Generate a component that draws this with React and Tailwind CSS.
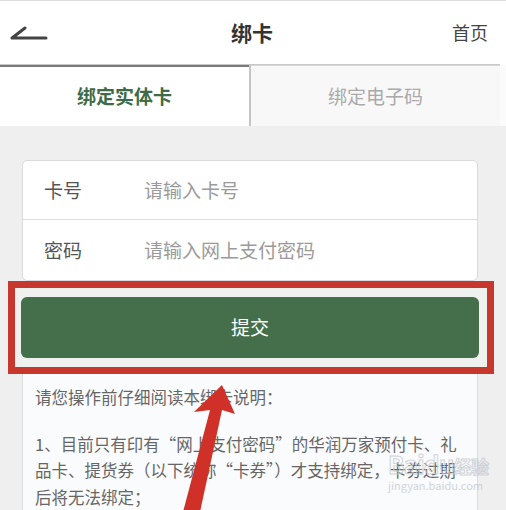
import React from 'react';

const font = { fontFamily: '"Noto Sans CJK SC", "Noto Sans", sans-serif' };

const App = () => {
    return (
        <div className="relative w-[506px] h-[510px] overflow-hidden bg-[#efefef]" style={font}>
            {/* Header */}
            <div className="bg-white border-t border-[#dcdcdc] w-[506px]">
                <div className="w-[500px] h-[64px] flex items-center justify-between border-b border-[#c8c8c8]">
                    <div className="w-[60px] pl-[10px]">
                        <svg width="38" height="16" viewBox="0 0 38 16">
                            <path d="M15 3 L2 13 L36 13" fill="none" stroke="#444" strokeWidth="3" strokeLinejoin="round" strokeLinecap="round" />
                        </svg>
                    </div>
                    <div className="text-[21px] font-bold text-[#333] pl-[4px]">绑卡</div>
                    <div className="w-[60px] text-[18px] text-[#444] text-right pr-[12px]">首页</div>
                </div>
            </div>

            {/* Tabs */}
            <div className="flex h-[61px] w-[506px]">
                <div className="w-[249px] bg-white border-t-2 border-[#7a7a7a] flex items-center justify-center">
                    <span className="text-[19px] font-bold text-[#3f6b47]">绑定实体卡</span>
                </div>
                <div className="w-[2px] bg-[#c4c4c4]"></div>
                <div className="w-[249px] bg-[#f8f8f8] border-t border-[#d8d8d8] flex items-center justify-center">
                    <span className="text-[19px] text-[#aaa]">绑定电子码</span>
                </div>
                <div className="flex-1 bg-[#fbfbfb]"></div>
            </div>

            {/* Form */}
            <div className="pt-[34px] px-[22px] w-[500px]">
                <div className="bg-white border border-[#dadada] rounded-[5px]">
                    <div className="h-[59px] flex items-center border-b border-[#dedede] text-[19px]">
                        <span className="w-[121px] pl-[21px] text-[#555]">卡号</span>
                        <span className="text-[#9a9a9a]">请输入卡号</span>
                    </div>
                    <div className="h-[60px] flex items-center text-[19px]">
                        <span className="w-[121px] pl-[21px] text-[#555]">密码</span>
                        <span className="text-[#9a9a9a]">请输入网上支付密码</span>
                    </div>
                </div>
            </div>

            {/* Submit, highlighted */}
            <div className="px-[8px] w-[502px]">
                <div className="border-[7px] border-[#c8372d] bg-[#eff1ef] pl-[6px] pr-[8px] py-[9px]">
                    <button className="w-full h-[61px] bg-[#456e4a] rounded-[6px] text-white text-[19px]">提交</button>
                </div>
            </div>

            {/* Notes */}
            <div className="px-[22px] w-[500px]">
                <div className="bg-[#fafbfc] border-x border-[#dcdcdc] px-[12px] pt-[10px] pb-[20px] text-[16.5px] text-[#666] leading-[26.5px]">
                    <div>请您操作前仔细阅读本绑卡说明：</div>
                    <div className="mt-[20px] whitespace-nowrap">1、目前只有印有“网上支付密码”的华润万家预付卡、礼</div>
                    <div className="whitespace-nowrap">品卡、提货券（以下统称“卡券”）才支持绑定，卡券过期</div>
                    <div>后将无法绑定；</div>
                </div>
            </div>

            {/* Watermark */}
            <div className="absolute left-[388px] top-[452px] opacity-80 leading-none pointer-events-none">
                <div className="text-[24px] font-bold tracking-tight" style={{ WebkitTextStroke: '1px #c8ccd2', color: 'transparent' }}>Baidu<span className="text-[18px]">经验</span></div>
                <div className="text-[11px] text-[#c8ccd2] mt-[4px]">jingyan.baidu.com</div>
            </div>

            {/* Annotation arrow */}
            <svg className="absolute left-0 top-0 pointer-events-none" width="506" height="510" viewBox="0 0 506 510">
                <polygon points="183,512 200,512 222,410 235,414 222,385 194,412 210,410" fill="#cf3129" />
            </svg>
        </div>
    );
};

export default App;
